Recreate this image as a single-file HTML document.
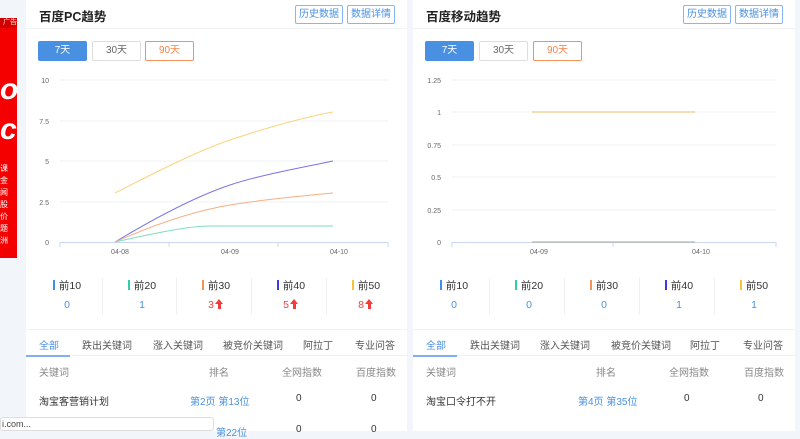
<!DOCTYPE html>
<html><head><meta charset="utf-8"><style>
*{margin:0;padding:0;box-sizing:border-box}
body{width:800px;height:431px;overflow:hidden;background:#f2f5f9;font-family:"Liberation Sans","Noto Sans CJK SC",sans-serif;position:relative;font-size:11px;color:#333}
.a{position:absolute;white-space:nowrap}
.panel{position:absolute;top:0;height:431px;background:#fff}
.hdr{position:absolute;left:0;right:0;top:0;height:29px;border-bottom:1px solid #f0f2f5}
.btn{position:absolute;height:19px;border:1px solid #86b8ee;border-radius:2px;color:#4a90e2;font-size:10px;line-height:17px;text-align:center;width:48px}
.rb{position:absolute;top:41px;height:20px;width:49px;border-radius:2px;font-size:10px;line-height:18px;text-align:center}
.st{position:absolute;top:278px;width:76px;text-align:center;font-size:10.5px}
.st i{display:inline-block;width:2px;height:10px;vertical-align:-1px;margin-right:4px}
.st b{display:block;font-weight:normal;margin-top:6px;color:#4a90e2}
.st b.up{color:#f23c3c}
.ar{display:inline-block;position:relative;width:9px;height:10px;vertical-align:-1px;margin-left:1px}
.ar:before{content:"";position:absolute;left:0;top:0;border-left:4.5px solid transparent;border-right:4.5px solid transparent;border-bottom:5px solid #f23c3c}
.ar:after{content:"";position:absolute;left:3px;top:5px;width:3px;height:5px;background:#f23c3c}
.sep{position:absolute;top:278px;width:1px;height:37px;background:#f0f0f0}
.tabs{position:absolute;left:0;right:0;top:329px;height:27px;border-top:1px solid #f2f2f2;border-bottom:1px solid #eef0f3}
.tab{position:absolute;top:337px;font-size:10px;color:#555}
</style></head><body>
<div class="a" style="left:0;top:18px;width:17px;height:240px;background:#f40000"></div>
<div class="a" style="left:0;top:18px;width:17px;height:10px;background:#d00000;color:#fdd;font-size:7px;line-height:10px;text-align:right">广告</div>
<div class="a" style="left:0;top:70px;color:#fff;font-size:30px;font-style:italic;font-weight:bold;line-height:40px">o<br>c</div>
<div class="a" style="left:0;top:163px;color:#fff;font-size:8px;line-height:12px;width:8px;white-space:normal">课金闻股价题洲</div>

<!-- LEFT PANEL -->
<div class="panel" style="left:26px;width:381px">
<div class="hdr"></div>
<div class="a" style="left:13px;top:6px;font-size:12.5px;font-weight:bold;color:#222">百度PC趋势</div>
<div class="btn" style="left:269px;top:5px">历史数据</div>
<div class="btn" style="left:321px;top:5px">数据详情</div>
<div class="rb" style="left:12px;background:#4a90e2;color:#fff;border:1px solid #4a90e2">7天</div>
<div class="rb" style="left:66px;border:1px solid #ddd;color:#666">30天</div>
<div class="rb" style="left:119px;border:1px solid #f5925a;color:#f5844a">90天</div>
<div class="st" style="left:3px"><i style="background:#3a8ef6"></i>前10<b>0</b></div>
<div class="sep" style="left:76px"></div>
<div class="st" style="left:78px"><i style="background:#2ccfa5"></i>前20<b>1</b></div>
<div class="sep" style="left:150px"></div>
<div class="st" style="left:152px"><i style="background:#f5925a"></i>前30<b class="up">3<span class="ar"></span></b></div>
<div class="sep" style="left:225px"></div>
<div class="st" style="left:227px"><i style="background:#3b3bea"></i>前40<b class="up">5<span class="ar"></span></b></div>
<div class="sep" style="left:300px"></div>
<div class="st" style="left:302px"><i style="background:#f7c233"></i>前50<b class="up">8<span class="ar"></span></b></div>
<div class="tabs"></div>
<div class="a" style="left:0;top:355px;width:44px;height:2px;background:#7fb2ec"></div>
<div class="tab" style="left:13px;color:#4a90e2">全部</div>
<div class="tab" style="left:56px">跌出关键词</div>
<div class="tab" style="left:127px">涨入关键词</div>
<div class="tab" style="left:197px">被竞价关键词</div>
<div class="tab" style="left:277px">阿拉丁</div>
<div class="tab" style="left:329px">专业问答</div>
<div class="a" style="left:13px;top:364px;color:#888;font-size:10px">关键词</div>
<div class="a" style="left:183px;top:364px;color:#888;font-size:10px">排名</div>
<div class="a" style="left:256px;top:364px;color:#888;font-size:10px">全网指数</div>
<div class="a" style="left:330px;top:364px;color:#888;font-size:10px">百度指数</div>
<div class="a" style="left:13px;top:393px;font-size:10px">淘宝客营销计划</div>
<div class="a" style="left:164px;top:393px;font-size:10px;color:#4a90e2">第2页 第13位</div>
<div class="a" style="left:270px;top:393px;font-size:10px">0</div>
<div class="a" style="left:345px;top:393px;font-size:10px">0</div>
<div class="a" style="left:190px;top:424px;font-size:10px;color:#4a90e2">第22位</div>
<div class="a" style="left:270px;top:424px;font-size:10px">0</div>
<div class="a" style="left:345px;top:424px;font-size:10px">0</div>
</div>
<svg class="a" style="left:0;top:0" width="407" height="270" font-family="Liberation Sans" font-size="7" fill="#666">
<g stroke="#eef0f3"><line x1="60" y1="80" x2="388" y2="80"/><line x1="60" y1="121" x2="388" y2="121"/><line x1="60" y1="161" x2="388" y2="161"/><line x1="60" y1="202" x2="388" y2="202"/></g>
<line x1="60" y1="242.5" x2="388" y2="242.5" stroke="#c9d8f0"/>
<g stroke="#c9d8f0"><line x1="60" y1="242" x2="60" y2="247"/><line x1="169" y1="242" x2="169" y2="247"/><line x1="278" y1="242" x2="278" y2="247"/><line x1="388" y1="242" x2="388" y2="247"/></g>
<g text-anchor="end"><text x="49" y="83">10</text><text x="49" y="124">7.5</text><text x="49" y="164">5</text><text x="49" y="205">2.5</text><text x="49" y="245">0</text></g>
<g text-anchor="middle"><text x="120" y="254">04-08</text><text x="230" y="254">04-09</text><text x="339" y="254">04-10</text></g>
<g fill="none" stroke-width="1">
<path d="M115 193 C160 170 200 150 230 140 S300 118 333 112" stroke="#fbd47c"/>
<path d="M115 242 C160 215 200 195 230 185 S300 168 333 161" stroke="#7b73e8"/>
<path d="M115 242 C160 222 200 210 230 205 S300 196 333 193" stroke="#f5ae84"/>
<path d="M115 242 C160 232 190 226 210 226 L333 226" stroke="#7fdcc0"/>
</g>
</svg>

<!-- RIGHT PANEL -->
<div class="panel" style="left:413px;width:382px">
<div class="hdr"></div>
<div class="a" style="left:13px;top:6px;font-size:12.5px;font-weight:bold;color:#222">百度移动趋势</div>
<div class="btn" style="left:270px;top:5px">历史数据</div>
<div class="btn" style="left:322px;top:5px">数据详情</div>
<div class="rb" style="left:12px;background:#4a90e2;color:#fff;border:1px solid #4a90e2">7天</div>
<div class="rb" style="left:66px;border:1px solid #ddd;color:#666">30天</div>
<div class="rb" style="left:120px;border:1px solid #f5925a;color:#f5844a">90天</div>
<div class="st" style="left:3px"><i style="background:#3a8ef6"></i>前10<b>0</b></div>
<div class="sep" style="left:76px"></div>
<div class="st" style="left:78px"><i style="background:#2ccfa5"></i>前20<b>0</b></div>
<div class="sep" style="left:151px"></div>
<div class="st" style="left:153px"><i style="background:#f5925a"></i>前30<b>0</b></div>
<div class="sep" style="left:226px"></div>
<div class="st" style="left:228px"><i style="background:#3b3bea"></i>前40<b>1</b></div>
<div class="sep" style="left:301px"></div>
<div class="st" style="left:303px"><i style="background:#f7c233"></i>前50<b>1</b></div>
<div class="tabs"></div>
<div class="a" style="left:0;top:355px;width:44px;height:2px;background:#7fb2ec"></div>
<div class="tab" style="left:13px;color:#4a90e2">全部</div>
<div class="tab" style="left:57px">跌出关键词</div>
<div class="tab" style="left:127px">涨入关键词</div>
<div class="tab" style="left:198px">被竞价关键词</div>
<div class="tab" style="left:277px">阿拉丁</div>
<div class="tab" style="left:330px">专业问答</div>
<div class="a" style="left:13px;top:364px;color:#888;font-size:10px">关键词</div>
<div class="a" style="left:183px;top:364px;color:#888;font-size:10px">排名</div>
<div class="a" style="left:256px;top:364px;color:#888;font-size:10px">全网指数</div>
<div class="a" style="left:331px;top:364px;color:#888;font-size:10px">百度指数</div>
<div class="a" style="left:13px;top:393px;font-size:10px">淘宝口令打不开</div>
<div class="a" style="left:165px;top:393px;font-size:10px;color:#4a90e2">第4页 第35位</div>
<div class="a" style="left:271px;top:393px;font-size:10px">0</div>
<div class="a" style="left:345px;top:393px;font-size:10px">0</div>
</div>
<svg class="a" style="left:400px;top:0" width="400" height="270" font-family="Liberation Sans" font-size="7" fill="#666">
<g stroke="#eef0f3"><line x1="52" y1="80" x2="376" y2="80"/><line x1="52" y1="112" x2="376" y2="112"/><line x1="52" y1="145" x2="376" y2="145"/><line x1="52" y1="177" x2="376" y2="177"/><line x1="52" y1="210" x2="376" y2="210"/></g>
<line x1="52" y1="242.5" x2="376" y2="242.5" stroke="#c9d8f0"/>
<g stroke="#c9d8f0"><line x1="52" y1="242" x2="52" y2="247"/><line x1="213" y1="242" x2="213" y2="247"/><line x1="376" y1="242" x2="376" y2="247"/></g>
<g text-anchor="end"><text x="41" y="83">1.25</text><text x="41" y="115">1</text><text x="41" y="148">0.75</text><text x="41" y="180">0.5</text><text x="41" y="213">0.25</text><text x="41" y="245">0</text></g>
<g text-anchor="middle"><text x="139" y="254">04-09</text><text x="301" y="254">04-10</text></g>
<line x1="132" y1="112" x2="295" y2="112" stroke="#eab86a"/>
<line x1="132" y1="242" x2="295" y2="242" stroke="#a8a890"/>
</svg>

<div class="a" style="left:0;top:417px;width:214px;height:14px;background:#fff;border:1px solid #ddd;border-radius:3px;font-size:9px;color:#444;line-height:12px;padding-left:1px">i.com...</div>
</body></html>
